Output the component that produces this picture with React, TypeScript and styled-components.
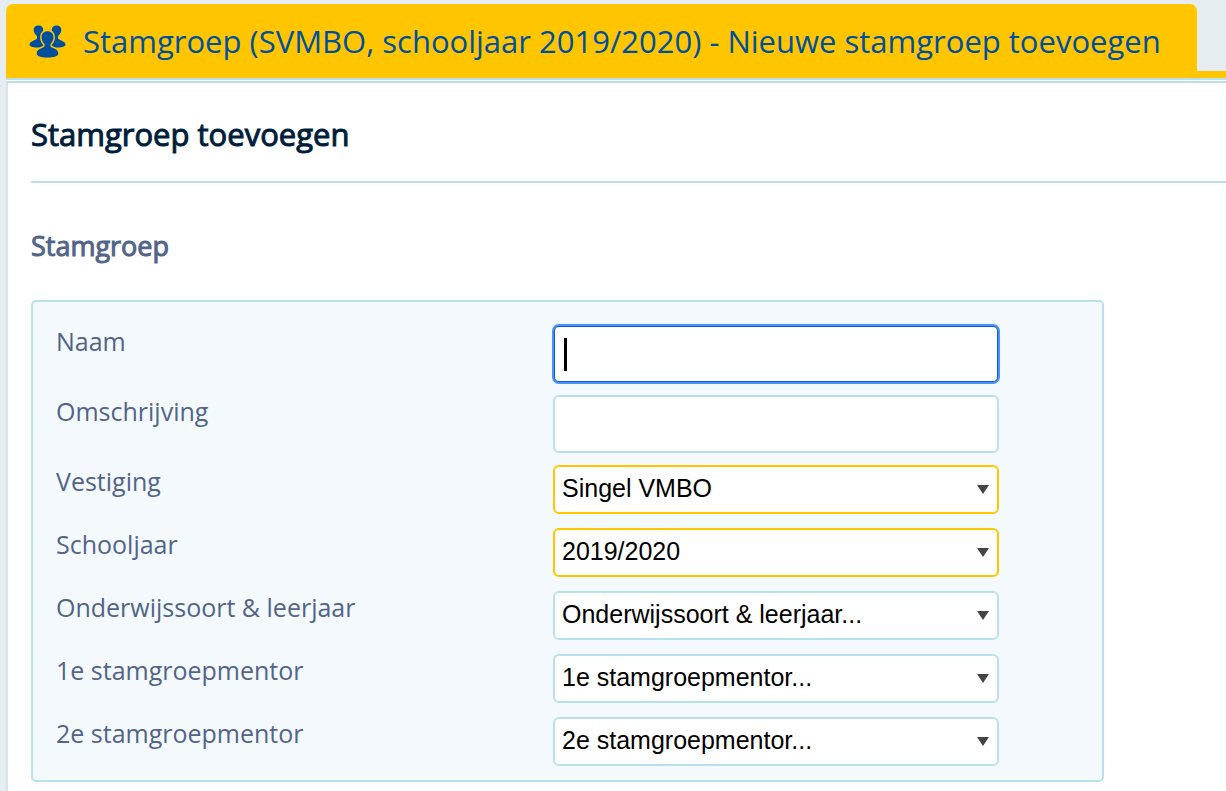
import React from 'react';
import styled, { createGlobalStyle } from 'styled-components';

const GlobalStyle = createGlobalStyle`
  * { box-sizing: border-box; }
  body {
    margin: 0;
    background: #e5edf0;
    font-family: "Open Sans", sans-serif;
    color: #526488;
  }
  #root { min-height: 100vh; display: flex; flex-direction: column; }
`;

const Page = styled.div`
  flex: 1;
  display: flex;
  flex-direction: column;
  padding: 4px 0 0 6px;
  overflow-x: hidden;
`;

const TabBar = styled.header`
  display: flex;
  border-bottom: 7px solid #ffc600;
`;

const Tab = styled.h1`
  display: flex;
  align-items: center;
  gap: 17px;
  height: 67px;
  margin: 0;
  padding: 7px 36px 0 23px;
  border-radius: 7px 7px 0 0;
  background: #ffc600;
  color: #004f9f;
  font-size: 31px;
  font-weight: 400;
  line-height: 48px;
  white-space: nowrap;
`;

const GroupIcon = styled.svg`
  flex: none;
  width: 37px;
  height: 33px;
  fill: #004f9f;
`;

const Divider = styled.div`
  height: 5px;
  border-top: 2px solid #bbe0ed;
  border-bottom: 2px solid #bbe0ed;
  background: #fff;
`;

const Panel = styled.main`
  flex: 1;
  padding: 24px 0 9px 23px;
  border-left: 2px solid #d5e4e9;
  background: #fff;
`;

const Title = styled.h2`
  margin: 0;
  padding-bottom: 20px;
  border-bottom: 2px solid #bbe0ed;
  color: #001e3c;
  font-size: 31px;
  font-weight: 400;
  -webkit-text-stroke: 1px currentColor;
  line-height: 54px;
`;

const SectionTitle = styled.h3`
  margin: 43px 0 34px;
  font-size: 27px;
  font-weight: 400;
  -webkit-text-stroke: 1px currentColor;
  line-height: 40px;
`;

const Fields = styled.div`
  width: calc(100% - 24px);
  max-width: 1073px;
  padding: 23px 23px 0;
  border: 2px solid #bbe0ed;
  border-radius: 5px;
  background: #f4f9fd;
`;

const Row = styled.div<{ $gap: number }>`
  display: grid;
  grid-template-columns: minmax(0, 497px) minmax(0, 446px);
  align-items: start;
  padding-bottom: ${(p) => p.$gap}px;
`;

const Label = styled.label`
  font-size: 25px;
  line-height: 32px;
`;

const TextInput = styled.input`
  width: 100%;
  height: 58px;
  padding: 0 7px;
  border: 2px solid #bbe0ed;
  border-radius: 6px;
  background: #fff;
  color: #000;
  font: 25px "Liberation Sans", Arial, sans-serif;
  outline: none;
`;

const ActiveInput = styled(TextInput)`
  border-color: #0a5fc4;
  outline: 2px solid #4d90fe;
  outline-offset: -1px;
  background: linear-gradient(#000, #000) 9px 11px / 3px 33px no-repeat #fff;
`;

const SelectBox = styled.div`
  position: relative;
`;

const Select = styled.select<{ $required?: boolean }>`
  display: block;
  appearance: none;
  width: 100%;
  height: 49px;
  padding: 0 32px 3px 7px;
  border: 2px solid ${(p) => (p.$required ? '#ffc600' : '#bbe0ed')};
  border-radius: 6px;
  background: #fff;
  color: #000;
  font: 25px "Liberation Sans", Arial, sans-serif;
`;

const Arrow = styled.svg`
  position: absolute;
  top: 20px;
  right: 10px;
  width: 12px;
  height: 9px;
  fill: #444;
  pointer-events: none;
`;

const choices = [
  { id: 'vestiging', label: 'Vestiging', value: 'Singel VMBO', required: true },
  { id: 'schooljaar', label: 'Schooljaar', value: '2019/2020', required: true },
  { id: 'onderwijssoort', label: 'Onderwijssoort & leerjaar', value: 'Onderwijssoort & leerjaar...' },
  { id: 'mentor1', label: '1e stamgroepmentor', value: '1e stamgroepmentor...' },
  { id: 'mentor2', label: '2e stamgroepmentor', value: '2e stamgroepmentor...' },
];

function PeopleIcon() {
  const side =
    'M9.500 .5C6.500 .5 4.600 2.500 4.700 5C4.800 7.500 6 9 7.300 10.200C8.400 11.300 8.400 13 7.500 14C6 15.500 .5 16.500 .5 19.500C.5 21.500 3.500 22.500 8 22.500H15V11L12.500 10L14.300 5C14.300 2.300 12.500 .5 9.500 .5Z';
  const front =
    'M18.500 6.200C14.800 6.200 12.500 8.700 12.600 12.200C12.700 15 13.700 17.300 15.200 18.700C16.200 20 15.800 21.800 14.200 22.500C11 23.800 7.700 24.900 7.700 28.500C7.700 31.300 12 32.500 18.500 32.500S29.300 31.300 29.300 28.500C29.300 24.900 26 23.800 22.800 22.500C21.200 21.800 20.800 20 21.800 18.700C23.300 17.300 24.300 15 24.400 12.200C24.500 8.700 22.200 6.200 18.500 6.200Z';
  return (
    <GroupIcon viewBox="0 0 37 33" aria-hidden="true">
      <path d={side} />
      <path d={side} transform="matrix(-1 0 0 1 37 0)" />
      <path d={front} stroke="#ffc600" strokeWidth="3" />
      <path d={front} />
    </GroupIcon>
  );
}

export default function App() {
  return (
    <>
      <GlobalStyle />
      <Page>
        <TabBar>
          <Tab>
            <PeopleIcon />
            <span>Stamgroep (SVMBO, schooljaar 2019/2020) - Nieuwe stamgroep toevoegen</span>
          </Tab>
        </TabBar>
        <Divider />
        <Panel>
          <Title>Stamgroep toevoegen</Title>
          <SectionTitle>Stamgroep</SectionTitle>
          <Fields>
            <Row $gap={12}>
              <Label htmlFor="naam">Naam</Label>
              <ActiveInput id="naam" type="text" />
            </Row>
            <Row $gap={12}>
              <Label htmlFor="omschrijving">Omschrijving</Label>
              <TextInput id="omschrijving" type="text" />
            </Row>
            {choices.map((c) => (
              <Row key={c.id} $gap={14}>
                <Label htmlFor={c.id}>{c.label}</Label>
                <SelectBox>
                  <Select id={c.id} $required={c.required}>
                    <option>{c.value}</option>
                  </Select>
                  <Arrow viewBox="0 0 12 9" aria-hidden="true">
                    <path d="M0 0H12L6 9Z" />
                  </Arrow>
                </SelectBox>
              </Row>
            ))}
          </Fields>
        </Panel>
      </Page>
    </>
  );
}
